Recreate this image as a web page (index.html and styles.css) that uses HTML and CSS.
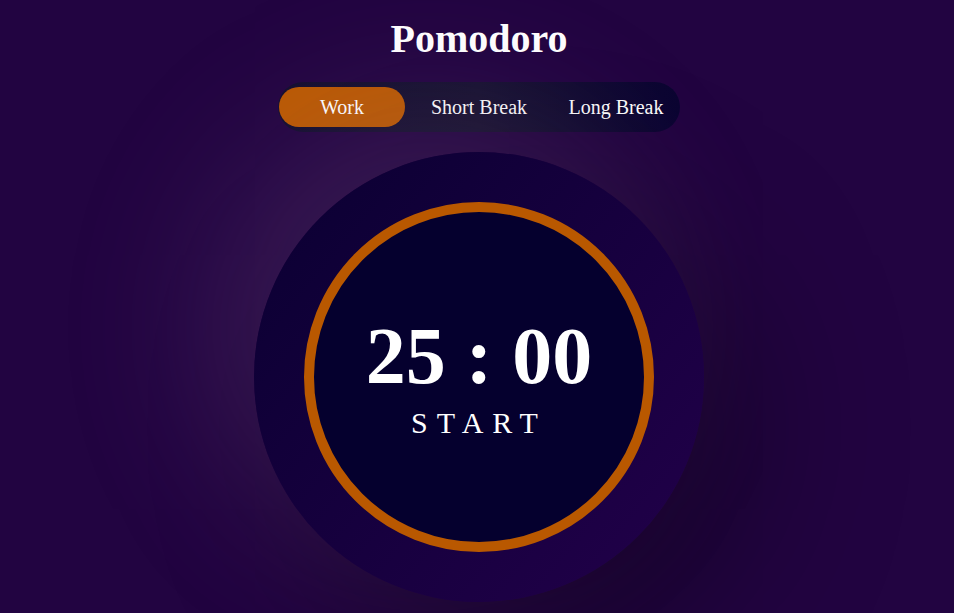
FILE: index.html
```html
<!DOCTYPE html>
<html>
<head>
<meta charset="utf-8">
<title>Pomodoro</title>
<link rel="stylesheet" href="styles.css">
</head>
<body>
<main class="app">
  <h1 class="title">Pomodoro</h1>
  <nav class="modes">
    <button class="mode active">Work</button>
    <button class="mode">Short Break</button>
    <button class="mode">Long Break</button>
  </nav>
  <section class="clock">
    <div class="ring">
      <div class="readout">
        <div class="time">25 : 00</div>
        <div class="action">START</div>
      </div>
    </div>
  </section>
</main>
</body>
</html>
```
FILE: styles.css
```css
html, body {
  margin: 0;
  padding: 0;
  height: 100%;
  overflow: hidden;
}
body {
  background: #220441;
  font-family: "Liberation Serif", "Times New Roman", serif;
  color: #ffffff;
}
.app {
  display: flex;
  flex-direction: column;
  align-items: center;
  padding-left: 4px;
}
.title {
  margin: 16px 0 0;
  font-size: 40px;
  font-weight: bold;
  line-height: 46px;
}
.modes {
  margin-top: 20px;
  display: flex;
  gap: 11px;
  padding: 5px 1px;
  border-radius: 25px;
  background: linear-gradient(90deg, #120c2e 0%, #161030 50%, #0b0432 100%);
}
.mode {
  width: 126px;
  height: 40px;
  border: none;
  border-radius: 20px;
  background: transparent;
  color: #ffffff;
  font-family: "Liberation Serif", "Times New Roman", serif;
  font-size: 20px;
  padding: 0;
}
.mode.active {
  background: #bb5900;
}
.clock {
  margin-top: 20px;
  width: 450px;
  height: 450px;
  border-radius: 50%;
  background: linear-gradient(-50deg, #22004a 0%, #0a0032 100%);
  box-shadow: -50px -50px 150px rgba(158, 130, 170, 0.18), 50px 50px 150px rgba(0, 0, 0, 0.35);
  display: flex;
  align-items: center;
  justify-content: center;
}
.ring {
  width: 330px;
  height: 330px;
  border: 10px solid #b95800;
  border-radius: 50%;
  background: #05002e;
  display: flex;
  align-items: center;
  justify-content: center;
}
.readout {
  display: flex;
  flex-direction: column;
  align-items: center;
  gap: 12px;
}
.time {
  font-size: 80px;
  font-weight: bold;
  line-height: 80px;
}
.action {
  font-size: 30px;
  line-height: 30px;
  letter-spacing: 9px;
  padding-left: 9px;
  margin-left: -9px;
}
```
